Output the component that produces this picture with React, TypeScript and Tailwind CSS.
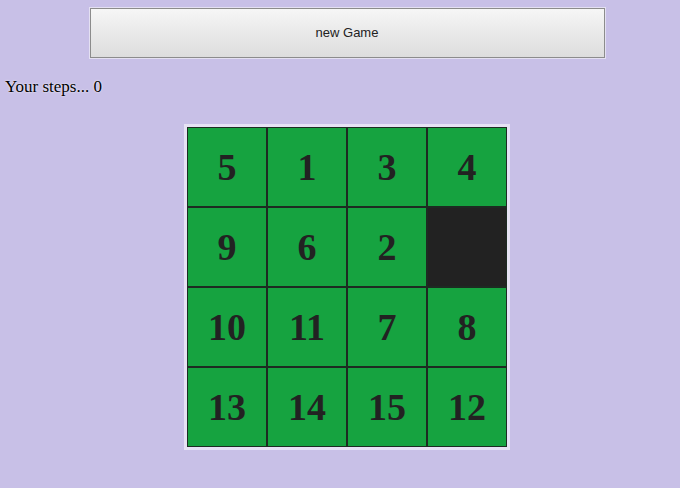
import React from 'react';

const tiles = [5, 1, 3, 4, 9, 6, 2, 0, 10, 11, 7, 8, 13, 14, 15, 12];

export default function App() {
    return (
        <div className="w-[680px] h-[488px] bg-[#c8c0e7] overflow-hidden">
            <div className="pl-[14px] pt-[8px] flex justify-center">
                <button className="w-[515px] h-[50px] border border-[#8c8c8c] bg-gradient-to-b from-[#f6f6f6] to-[#dddddd] text-[13px] text-[#222] font-['Liberation_Sans',Arial,sans-serif] shadow-[0_0_0_1px_#e4e0f2]">
                    new Game
                </button>
            </div>
            <div className="mt-[19px] pl-[5px] text-[17px] leading-[20px] text-black font-['Liberation_Serif','Times_New_Roman',serif] [text-shadow:0_0_2px_#fff]">
                Your steps... 0
            </div>
            <div className="pl-[14px] mt-[27px] flex justify-center">
                <div className="border-[3px] border-[#e6e2f4] grid grid-cols-4">
                    {tiles.map((n, i) => (
                        <div
                            key={i}
                            className={`w-[80px] h-[80px] border border-[#1d2b22] flex items-center justify-center text-[38px] font-bold text-[#222] font-['Liberation_Serif','Times_New_Roman',serif] ${n === 0 ? 'bg-[#222222]' : 'bg-[#16a340]'}`}
                        >
                            {n !== 0 && n}
                        </div>
                    ))}
                </div>
            </div>
        </div>
    );
}
